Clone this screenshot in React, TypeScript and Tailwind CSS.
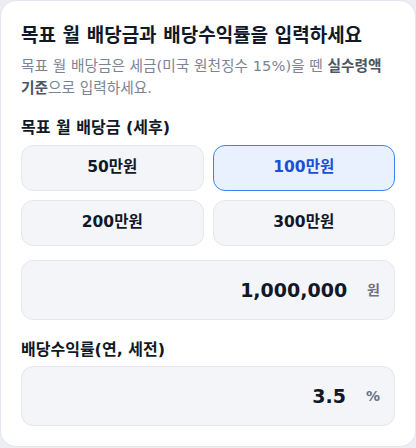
import { useState } from "react";

const AMOUNTS = [500000, 1000000, 2000000, 3000000];

export default function App() {
  const [amount, setAmount] = useState(1000000);
  const [rate, setRate] = useState("3.5");

  return (
    <div
      className="min-h-screen bg-[#eceef3]"
      style={{ fontFamily: '"DejaVu Sans", "Noto Sans CJK KR", sans-serif' }}
    >
      <div className="bg-white border border-[#e3e6ec] rounded-2xl px-5 pt-5 pb-5">
        <h2 className="text-[19px] leading-7 font-bold text-[#111827] break-keep">
          목표 월 배당금과 배당수익률을 입력하세요
        </h2>
        <p className="mt-1.5 text-[14.7px] leading-[22px] text-[#7b8494] break-keep">
          목표 월 배당금은 세금(미국 원천징수 15%)을 뗀{" "}
          <span className="font-bold text-[#4b5563]">실수령액 기준</span>으로 입력하세요.
        </p>

        <div className="mt-[17px] text-[16px] leading-6 font-bold text-[#111827]">
          목표 월 배당금 (세후)
        </div>
        <div className="mt-[5px] grid grid-cols-2 gap-x-[9px] gap-y-[9px]">
          {AMOUNTS.map((a) => {
            const active = a === amount;
            return (
              <button
                key={a}
                onClick={() => setAmount(a)}
                className={
                  active
                    ? "h-[46px] rounded-xl border border-[#3b82f6] bg-[#eaf1fe] text-[15.5px] font-bold text-[#1d4ed8]"
                    : "h-[46px] rounded-xl border border-[#e5e7eb] bg-[#f4f5f9] text-[15.5px] font-bold text-[#111827]"
                }
              >
                {a / 10000}만원
              </button>
            );
          })}
        </div>

        <div className="mt-[14px] h-[60px] flex items-center rounded-xl border border-[#e5e7eb] bg-[#f4f5f9] pl-4 pr-[14px]">
          <input
            type="text"
            value={amount.toLocaleString("en-US")}
            onChange={(e) => {
              const n = Number(e.target.value.replace(/[^0-9]/g, ""));
              setAmount(n);
            }}
            className="flex-1 min-w-0 bg-transparent text-right text-[19px] font-bold text-[#111827] outline-none"
          />
          <span className="ml-5 text-[14px] font-bold text-[#6b7280]">원</span>
        </div>

        <div className="mt-[18px] text-[16px] leading-6 font-bold text-[#111827]">
          배당수익률(연, 세전)
        </div>
        <div className="mt-[4px] h-[60px] flex items-center rounded-xl border border-[#e5e7eb] bg-[#f4f5f9] pl-4 pr-[14px]">
          <input
            type="text"
            value={rate}
            onChange={(e) => setRate(e.target.value)}
            className="flex-1 min-w-0 bg-transparent text-right text-[19px] font-bold text-[#111827] outline-none"
          />
          <span className="ml-5 text-[14px] font-bold text-[#6b7280]">%</span>
        </div>
      </div>
    </div>
  );
}
